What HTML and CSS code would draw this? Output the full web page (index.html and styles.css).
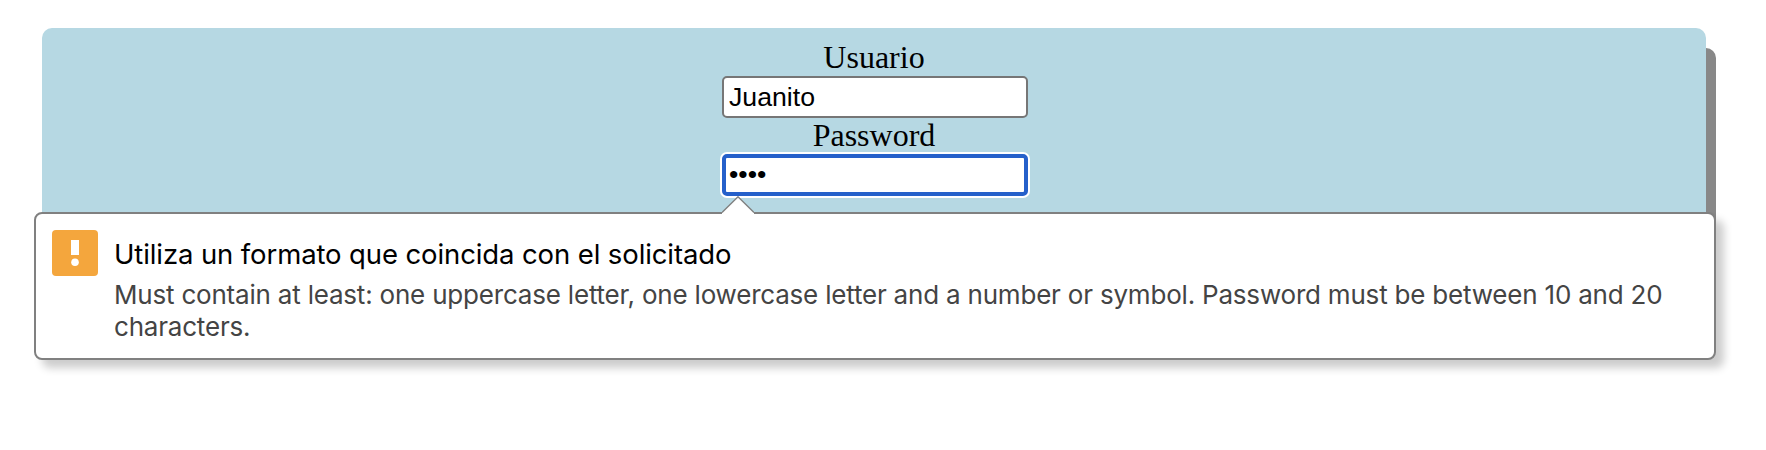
FILE: index.html
```html
<!DOCTYPE html>
<html lang="es">
<head>
<meta charset="utf-8">
<title>Formulario</title>
<link rel="stylesheet" href="styles.css">
</head>
<body>
<form class="form">
  <label class="label" for="usuario">Usuario</label>
  <input class="field" id="usuario" type="text" value="Juanito">
  <label class="label" for="password">Password</label>
  <input class="field field-active" id="password" type="password" value="abcd">
</form>
<div class="bubble" role="alert">
  <svg class="arrow" width="32" height="18" viewBox="0 0 32 18"><path d="M0 18V16.5L16 .8 32 16.5V18Z" fill="#fff"/><path d="M0 16.5 16 .8 32 16.5" fill="none" stroke="#808080" stroke-width="1.4"/></svg>
  <svg class="icon" width="46" height="46" viewBox="0 0 46 46"><rect width="46" height="46" rx="4" fill="#f4a63d"/><path d="M19 10h8v15h-8z" fill="#fff"/><circle cx="23" cy="32.3" r="3.8" fill="#fff"/></svg>
  <div class="message">
    <div class="title">Utiliza un formato que coincida con el solicitado</div>
    <div class="detail">Must contain at least: one uppercase letter, one lowercase letter and a number or symbol. Password must be between 10 and 20<br>characters.</div>
  </div>
</div>
</body>
</html>
```
FILE: styles.css
```css
* { box-sizing: border-box; }
body {
  margin: 0;
  padding: 28px 60px 0 42px;
  height: 450px;
  overflow: hidden;
  background: #fff;
}
.form {
  display: flex;
  flex-direction: column;
  align-items: center;
  width: 1664px;
  height: 250px;
  padding-top: 12px;
  background: #b6d8e3;
  border-radius: 10px;
  box-shadow: 10px 20px #888;
}
.label {
  height: 36px;
  font: 32px/34px "Liberation Serif", serif;
  color: #000;
}
.field {
  width: 306px;
  height: 42px;
  margin: 0 0 0 2px;
  padding: 2px 5px;
  border: 2px solid #767676;
  border-radius: 5px;
  background: #fff;
  color: #000;
  font: 26.67px "Liberation Sans", sans-serif;
  outline: none;
}
.field-active {
  border: 4px solid #2560ca;
  padding: 0 3px 2px;
  box-shadow: 0 0 0 2px #fff;
}
.bubble {
  position: absolute;
  left: 34px;
  top: 212px;
  display: flex;
  width: 1682px;
  height: 148px;
  padding: 16px;
  background: #fff;
  border: 2px solid #808080;
  border-radius: 8px;
  box-shadow: 8px 8px 8px rgba(0, 0, 0, .2);
}
.arrow {
  position: absolute;
  left: 686px;
  top: -18px;
}
.icon { flex: none; }
.message {
  padding: 7px 0 0 16px;
  font-family: Inter, sans-serif;
  white-space: nowrap;
}
.title {
  font-size: 27.5px;
  line-height: 34px;
  letter-spacing: -0.11px;
  color: #000;
}
.detail {
  margin-top: 8px;
  font-size: 26px;
  line-height: 32px;
  letter-spacing: -0.2px;
  color: #444;
}
```
